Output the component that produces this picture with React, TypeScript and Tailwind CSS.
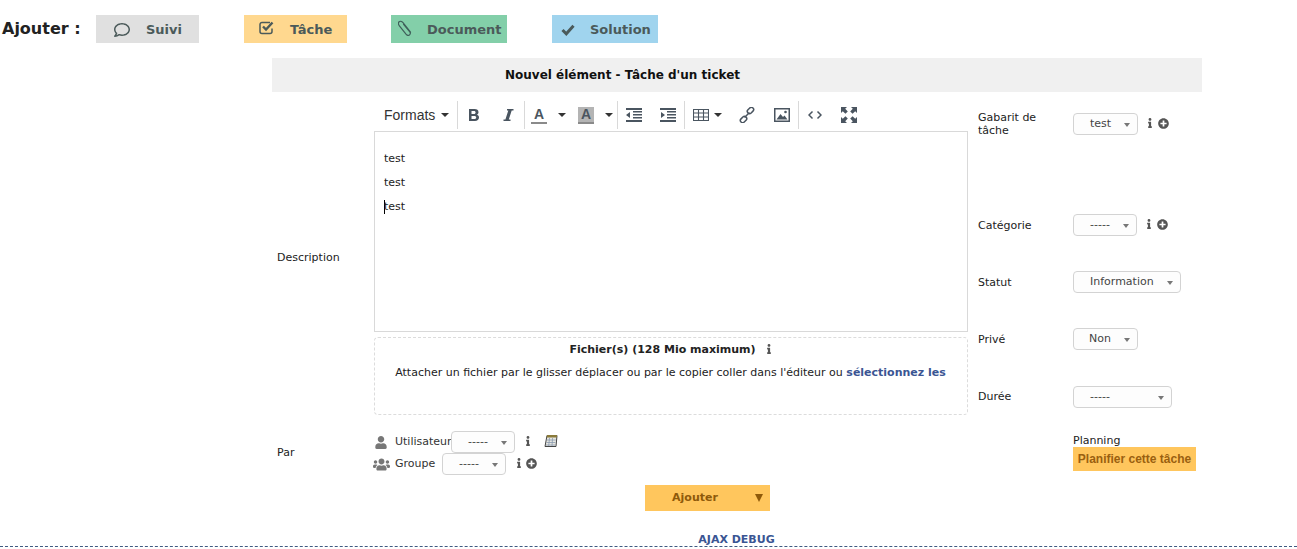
import { FaInfo, FaPlusCircle, FaRegComment, FaUser, FaUsers } from 'react-icons/fa';

const dejavu = 'font-["DejaVu_Sans",Verdana,sans-serif]';

function Select({ label, w, pl = 'pl-[16px]' }: { label: string; w: string; pl?: string }) {
  return (
    <div className={`flex h-[22px] ${w} ${pl} shrink-0 items-center justify-between rounded-[4px] border border-[#d3d3d3] bg-[#fdfdfd] pr-[7px] text-[11px] text-[#444]`}>
      <span className="pt-[1px]">{label}</span>
      <span className="mt-[2px] h-0 w-0 border-x-[3px] border-t-[4px] border-x-transparent border-t-[#777]" />
    </div>
  );
}

function Info({ className = '' }: { className?: string }) {
  return <FaInfo className={`mb-[2px] h-[10px] w-[6px] text-[#555] ${className}`} />;
}

function Plus({ className = '' }: { className?: string }) {
  return <FaPlusCircle className={`mb-[2px] h-[11px] w-[11px] text-[#555] ${className}`} />;
}

function Sep({ ml }: { ml: string }) {
  return <span className={`${ml} h-[28px] w-px shrink-0 bg-[#d9d9d9]`} />;
}

function Caret({ ml }: { ml: string }) {
  return <span className={`${ml} h-0 w-[8px] shrink-0 border-x-[4px] border-t-[4px] border-x-transparent border-t-[#333]`} />;
}

function AddButton({ icon, label, bg, w, ml, pl, iconW }: { icon: React.ReactNode; label: string; bg: string; w: string; ml: string; pl: string; iconW: string }) {
  return (
    <div className={`flex h-[28px] ${w} ${ml} ${bg} ${pl} items-center pt-[1px] text-[13px] font-bold text-[#4b5a5a]`}>
      <span className={`flex ${iconW} shrink-0 items-center`}>{icon}</span>
      <span>{label}</span>
    </div>
  );
}

function RightRow({ label, h, children }: { label: React.ReactNode; h: string; children: React.ReactNode }) {
  return (
    <div className={`flex ${h} items-start`}>
      <div className="w-[95px] pt-[3px] text-[11px] leading-[13px] text-[#222]">{label}</div>
      <div className="mt-[5px] flex items-center">{children}</div>
    </div>
  );
}

export default function App() {
  return (
    <div className={`h-[549px] w-[1297px] overflow-hidden bg-white ${dejavu}`}>
      <div className="flex items-center pl-[2px] pt-[15px]">
        <span className="w-[94px] text-[16px] font-bold text-[#222]">Ajouter :</span>
        <AddButton icon={<FaRegComment className="h-[16px] w-[16px]" />} label="Suivi" bg="bg-[#e0e0e0]" w="w-[103px]" ml="ml-0" pl="pl-[18px]" iconW="w-[32px]" />
        <AddButton
          icon={
            <svg viewBox="0 0 16 15" className="-mt-[4px] h-[15px] w-[16px]">
              <path fill="none" stroke="#4b5a5a" strokeWidth="1.500" strokeLinejoin="round" d="M13 8.500V11.500a2 2 0 0 1-2 2H3a2 2 0 0 1-2-2V4.500a2 2 0 0 1 2-2h8" />
              <path fill="none" stroke="#4b5a5a" strokeWidth="2.400" d="M4 6.500l3 3 6.500-7" />
            </svg>
          }
          label="Tâche"
          bg="bg-[#ffd88f]"
          w="w-[103px]"
          ml="ml-[45px]"
          pl="pl-[15px]"
          iconW="w-[31px]"
        />
        <AddButton
          icon={
            <svg viewBox="0 0 14 16" className="-mt-[3px] h-[16px] w-[14px]">
              <path fill="none" stroke="#3f5f5a" strokeWidth="1.200" strokeLinecap="round" d="M12.500 12.200L5 2.600C3.800 1 1.800.9.900 2c-.8 1-.5 2.500.5 3.800l6.600 8.400c1 1.200 2.400 1.500 3.400.8 1-.8 1.200-1.800.6-2.800L5.600 4.400" />
            </svg>
          }
          label="Document"
          bg="bg-[#83cfa9]"
          w="w-[116px]"
          ml="ml-[44px]"
          pl="pl-[7px]"
          iconW="w-[29px]"
        />
        <AddButton
          icon={
            <svg viewBox="0 0 14 12" className="h-[12px] w-[14px]">
              <path fill="none" stroke="#4b5a5a" strokeWidth="3" d="M1.500 6l3.800 3.800L12.500 1.800" />
            </svg>
          }
          label="Solution"
          bg="bg-[#a0d4ee]"
          w="w-[106px]"
          ml="ml-[45px]"
          pl="pl-[9px]"
          iconW="w-[29px]"
        />
      </div>

      <div className="ml-[272px] mt-[15px] w-[930px]">
        <div className="flex h-[34px] items-center bg-[#f0f0f0] pl-[233px] text-[12px] font-bold text-[#111]">
          Nouvel élément - Tâche d'un ticket
        </div>

        <div className="flex pt-[8px]">
          <div className="flex w-[102px] items-center pl-[5px] pt-[2px] text-[11px] text-[#222]">Description</div>

          <div className="w-[594px]">
            <div className="flex h-[31px] items-center pb-[2px] pl-[10px] pt-[1px] font-['Liberation_Sans',Arial,sans-serif] text-[#333]">
              <span className="flex w-[73px] shrink-0 items-center gap-[6px] text-[14px]">
                Formats <Caret ml="ml-0" />
              </span>
              <Sep ml="ml-0" />
              <svg viewBox="0 0 12 14" className="ml-[10px] h-[14px] w-[12px] shrink-0"><path fill="#4a5560" fillRule="evenodd" d="M1 1h5.500C9 1 10.500 2.200 10.500 4.200c0 1.200-.6 2-1.500 2.500 1.300.4 2 1.500 2 2.800C11 11.800 9.300 13 7 13H1zM3.500 3v3h2.600c.9 0 1.500-.6 1.500-1.500S7 3 6.100 3zM3.500 8v3h3c1 0 1.700-.6 1.700-1.500S7.500 8 6.500 8z" /></svg>
              <svg viewBox="0 0 12 14" className="ml-[22px] h-[14px] w-[12px] shrink-0"><path fill="#4a5560" d="M5 1h6.500v1.500H9.700L6.800 11.500h1.700V13H1.500v-1.500h1.900L6.300 2.500H5z" /></svg>
              <Sep ml="ml-[10px]" />
              <span className="ml-[6px] flex h-[17px] w-[16px] shrink-0 flex-col items-center justify-end border-b-[2px] border-[#8a8a8a] text-[14px] font-bold leading-[15px] text-[#4a5560]">A</span>
              <Caret ml="ml-[11px]" />
              <span className="ml-[12px] flex h-[17px] w-[16px] shrink-0 flex-col items-center justify-end border-b-[2px] border-[#8a8a8a] bg-[#b4b4b4] text-[14px] font-bold leading-[15px] text-[#4a5560]">A</span>
              <Caret ml="ml-[11px]" />
              <Sep ml="ml-[4px]" />
              <svg viewBox="0 0 16 14" className="ml-[8px] h-[14px] w-[16px] shrink-0"><path fill="#4a5560" d="M0 0h16v2H0zM7 3h9v1.500H7zM7 6h9v1.500H7zM7 9h9v1.500H7zM0 12h16v2H0zM4 4v6L0 7z" /></svg>
              <svg viewBox="0 0 16 14" className="ml-[18px] h-[14px] w-[16px] shrink-0"><path fill="#4a5560" d="M0 0h16v2H0zM7 3h9v1.500H7zM7 6h9v1.500H7zM7 9h9v1.500H7zM0 12h16v2H0zM1 4v6l4-3z" /></svg>
              <Sep ml="ml-[8px]" />
              <svg viewBox="0 0 16 14" className="ml-[8px] h-[14px] w-[16px] shrink-0"><path fill="none" stroke="#4a5560" strokeWidth="1.100" d="M.5 1.500h15v11H.5zM.5 5h15M.5 9h15M5.500 1.500v11M10.500 1.500v11" /></svg>
              <Caret ml="ml-[5px]" />
              <svg viewBox="0 0 16 16" className="ml-[17px] h-[16px] w-[16px] shrink-0"><g fill="none" stroke="#4a5560" strokeWidth="1.500"><rect x="8" y="1.200" width="7" height="4.500" rx="2.200" transform="rotate(-45 11.500 3.500)" /><rect x="1" y="10.300" width="7" height="4.500" rx="2.200" transform="rotate(-45 4.500 12.500)" /><path d="M5.500 10.500l5-5" /></g></svg>
              <svg viewBox="0 0 16 14" className="ml-[19px] h-[14px] w-[16px] shrink-0"><path fill="#4a5560" fillRule="evenodd" d="M0 0h16v14H0zM1.500 1.500v11h13v-11z" /><path fill="#4a5560" d="M2.500 11.500l4-5.500 2.500 3 1.500-1.500 3 4z" /><circle cx="11.500" cy="4" r="1.300" fill="#4a5560" /></svg>
              <Sep ml="ml-[8px]" />
              <svg viewBox="0 0 14 10" className="ml-[9px] h-[10px] w-[14px] shrink-0"><path fill="none" stroke="#4a5560" strokeWidth="1.500" d="M4.500 1.500L1 5l3.500 3.500M9.500 1.500L13 5 9.500 8.500" /></svg>
              <svg viewBox="0 0 16 16" className="ml-[19px] h-[16px] w-[16px] shrink-0"><path fill="#4a5560" d="M0 0h6L4.200 1.800 6.800 4.400 4.400 6.800 1.800 4.200 0 6zM16 0v6l-1.800-1.800-2.600 2.600-2.400-2.400 2.600-2.600L10 0zM0 16v-6l1.800 1.800 2.600-2.600 2.400 2.400-2.600 2.600L6 16zM16 16h-6l1.800-1.800-2.600-2.600 2.400-2.400 2.600 2.600L16 10z" /></svg>
            </div>

            <div className="h-[201px] border border-[#d9d9d9] px-[9px] pt-[20px] text-[11px] leading-[14px] text-[#222]">
              <p>test</p>
              <p className="mt-[10px]">test</p>
              <p className="mt-[10px] [box-shadow:inset_1px_0_0_#000]">test</p>
            </div>

            <div className="mt-[5px] h-[78px] rounded-[4px] border border-dashed border-[#dcdcdc] pr-[1px] pt-[4px] text-center text-[11px] text-[#222]">
              <div className="flex items-center justify-center font-bold">
                Fichier(s) (128 Mio maximum)
                <Info className="mb-0 ml-[10px]" />
              </div>
              <div className="mt-[6px]">
                Attacher un fichier par le glisser déplacer ou par le copier coller dans l'éditeur ou{' '}
                <span className="font-bold text-[#3a5593]">sélectionnez les</span>
              </div>
            </div>
          </div>

          <div className="pl-[10px] pt-[8px]">
            <RightRow label={<>Gabarit de<br />tâche</>} h="h-[101px]">
              <Select label="test" w="w-[65px]" />
              <Info className="ml-[9px]" />
              <Plus className="ml-[5px]" />
            </RightRow>
            <RightRow label={<span className="block pt-[7px]">Catégorie</span>} h="h-[57px]">
              <Select label="-----" w="w-[64px]" />
              <Info className="ml-[9px]" />
              <Plus className="ml-[5px]" />
            </RightRow>
            <RightRow label={<span className="block pt-[7px]">Statut</span>} h="h-[57px]">
              <Select label="Information" w="w-[108px]" />
            </RightRow>
            <RightRow label={<span className="block pt-[7px]">Privé</span>} h="h-[58px]">
              <Select label="Non" w="w-[65px]" pl="pl-[15px]" />
            </RightRow>
            <RightRow label={<span className="block pt-[6px]">Durée</span>} h="h-[34px]">
              <Select label="-----" w="w-[99px]" />
            </RightRow>
          </div>
        </div>

        <div className="mt-[16px] flex">
          <div className="flex w-[102px] items-center pl-[5px] text-[11px] text-[#222]">Par</div>
          <div className="w-[594px] text-[11px] text-[#333]">
            <div className="flex h-[22px] items-center">
              <FaUser className="ml-[1px] h-[13px] w-[12px] text-[#777]" />
              <span className="ml-[8px] w-[56px]">Utilisateur</span>
              <Select label="-----" w="w-[64px]" />
              <Info className="ml-[10px]" />
              <svg viewBox="0 0 14 14" className="mb-[2px] ml-[13px] h-[14px] w-[14px] shrink-0">
                <path fill="#e6e6e0" stroke="#444" d="M3 1.500h10l-1 11H1z" />
                <path fill="#8a7a3a" d="M3 1h10l-.3 2.500H2.800z" />
                <path fill="none" stroke="#8a9ab0" strokeWidth="0.800" d="M2.800 6h9M2.400 8.500h9M2 11h9.500M5.500 4l-.8 8M8.500 4l-.5 8" />
              </svg>
            </div>
            <div className="flex h-[22px] items-center">
              <FaUsers className="-ml-[1px] h-[15px] w-[17px] text-[#777]" />
              <span className="ml-[5px] w-[47px]">Groupe</span>
              <Select label="-----" w="w-[64px]" />
              <Info className="ml-[10px]" />
              <Plus className="ml-[4px]" />
            </div>
          </div>
          <div className="pl-[105px] pt-[3px]">
            <div className="text-[11px] leading-[13px] text-[#222]">Planning</div>
            <div className="flex h-[24px] w-[123px] items-center justify-center bg-[#ffc65d] font-['Liberation_Sans',Arial,sans-serif] text-[12px] font-bold text-[#9a6010]">
              Planifier cette tâche
            </div>
          </div>
        </div>
      </div>

      <div className="ml-[645px] mt-[10px] flex h-[26px] w-[125px] items-center bg-[#ffc65d] text-[11px] font-bold text-[#8f5a0a]">
        <span className="w-[100px] text-center">Ajouter</span>
        <span className="mb-[1px] ml-[10px] h-0 w-0 border-x-[4px] border-t-[8px] border-x-transparent border-t-[#8f5a0a]" />
      </div>

      <div className="mt-[22px] h-[14px] border-b border-dashed border-[#3f5a80] pl-[176px] text-center text-[11px] font-bold leading-[14px] text-[#3a5593]">
        AJAX DEBUG
      </div>
    </div>
  );
}
